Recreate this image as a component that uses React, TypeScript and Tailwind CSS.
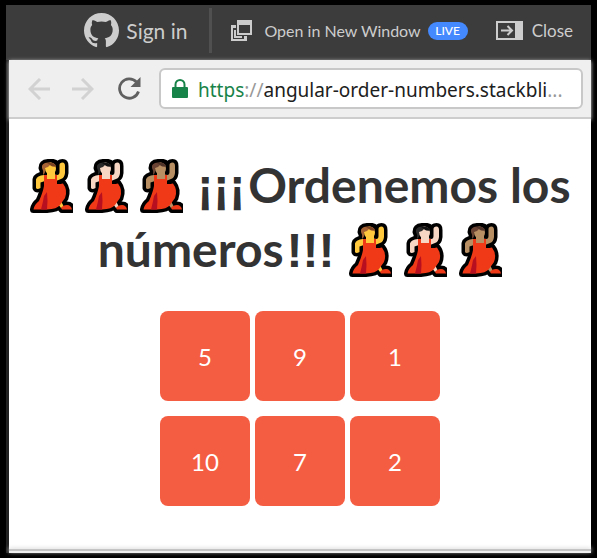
import React from "react";

type Tone = { skin: string; hair: string; shade: string };

const TONES: Tone[] = [
  { skin: "#ffc83d", hair: "#a56234", shade: "#7d4424" },
  { skin: "#f7d7c4", hair: "#2b2a2a", shade: "#111111" },
  { skin: "#b88f62", hair: "#6b4334", shade: "#50342a" },
];

const NUMBERS = [
  [5, 9, 1],
  [10, 7, 2],
];

function Dancer({ tone }: { tone: Tone }) {
  const hair = "M12 9Q12 4 18 3.5H23Q27 4 27 9L24 13Q17 17 13 16Q14 12 12 9Z";
  const raised = "M25 15.5Q29.5 17 29.5 13V6Q29.5 3.5 32.5 3.5Q35 3.5 35 7V14Q34.5 19 31 20L26 22Z";
  const lowered = "M14 16Q7 16.5 6 20.5V29Q7 31 10.5 29V23.5L15 22Z";
  const dress = "M14 16H17V20H25V16H27V25Q31 25 33 24.5Q38 31 35 39L30 46Q27 50 17 50.5H3.5Q4 46 9 42Q13 33 14 27Z";
  const leg = "M28 45L31 42L34 48L31 49Z";
  const shoe = "M31 49Q33 46 37 46Q41 46 42 50.5H32Z";
  return (
    <svg viewBox="0 0 43 54" className="inline-block h-[54px] w-[43px]" aria-hidden="true">
      <g fill="#000" stroke="#000" strokeWidth="7" strokeLinejoin="round">
        <path d={hair} />
        <path d={raised} />
        <path d={lowered} />
        <path d={dress} />
        <path d={leg} />
        <path d={shoe} />
      </g>
      <path d={raised + lowered + leg} fill={tone.skin} />
      <path d="M17 13H25V22H17Z" fill={tone.skin} />
      <ellipse cx="20.5" cy="9.5" rx="5.5" ry="6" fill={tone.skin} />
      <path d="M12 9Q11 4 18 3.5H21Q25 4 26 7.5Q22 8 20 6Q18 9 15 9Q16 14 13 16Q14 12 12 9Z" fill={tone.hair} />
      <path d="M17 4H21Q25 4 26 7.5Q22 8 20 6Z" fill={tone.shade} />
      <path d={dress} fill="#f03a17" />
      <path d="M17 33Q18 42 17 50.5H11Q13 43 14 37Z" fill="#b80f20" />
      <path d={shoe} fill="#f03a17" />
    </svg>
  );
}

function Dancers() {
  return (
    <span className="inline-flex gap-3 align-[-10px]">
      {TONES.map((tone) => (
        <Dancer key={tone.skin} tone={tone} />
      ))}
    </span>
  );
}

function Marks({ children }: { children: string }) {
  return <span className="mx-[3px] font-['Liberation_Sans',Arial,sans-serif] leading-none">{children}</span>;
}

function Toolbar() {
  return (
    <header className="flex h-[55px] items-center justify-end bg-[#3c3c3c] pr-[18px] pb-1 text-[17px] text-[#cdcdcd]">
      <button className="flex items-center gap-[7px] text-[21px]">
        <svg viewBox="0 0 16 16" className="size-[35px]" fill="currentColor" aria-hidden="true">
          <path d="M8 0C3.58 0 0 3.58 0 8c0 3.54 2.29 6.53 5.47 7.59.4.07.55-.17.55-.38 0-.19-.01-.82-.01-1.49-2.01.37-2.53-.49-2.69-.94-.09-.23-.48-.94-.82-1.13-.28-.15-.68-.52-.01-.53.63-.01 1.08.58 1.23.82.72 1.21 1.87.87 2.33.66.07-.52.28-.87.51-1.07-1.78-.2-3.64-.89-3.64-3.95 0-.87.31-1.59.82-2.15-.08-.2-.36-1.02.08-2.12 0 0 .67-.21 2.2.82.64-.18 1.32-.27 2-.27s1.36.09 2 .27c1.53-1.04 2.2-.82 2.2-.82.44 1.1.16 1.92.08 2.12.51.56.82 1.27.82 2.15 0 3.07-1.87 3.75-3.65 3.95.29.25.54.73.54 1.48 0 1.07-.01 1.93-.01 2.2 0 .21.15.46.55.38A8.01 8.01 0 0 0 16 8c0-4.42-3.58-8-8-8z" />
        </svg>
        Sign in
      </button>
      <span className="ml-[22px] h-[45px] w-[3px] bg-[#505050]" />
      <button className="ml-[19px] flex items-center">
        <svg viewBox="0 0 21 21" className="mr-3 size-[21px]" fill="currentColor" fillRule="evenodd" aria-hidden="true">
          <path d="M6 0H21V15H6ZM8 5V13H19V5Z" />
          <path d="M0 5H5V8H2V19H13V16H16V21H0Z" />
          <path d="M3 10H5V16H11V18H3Z" />
        </svg>
        <span className="text-base">Open in New Window</span>
        <span className="ml-[7px] flex h-[18px] w-10 items-center justify-center rounded-full bg-[#4489fe] text-xs font-medium text-white">
          LIVE
        </span>
      </button>
      <button className="ml-7 flex items-center gap-[9px]">
        <svg viewBox="0 0 27 19" className="h-[19px] w-[27px]" aria-hidden="true">
          <path d="M0 0H27V19H0ZM2 2V17H19V2Z" fill="currentColor" fillRule="evenodd" />
          <path d="M5 9.5H16M11.5 5L16 9.5L11.5 14" fill="none" stroke="currentColor" strokeWidth="2" />
        </svg>
        Close
      </button>
    </header>
  );
}

function AddressBar() {
  return (
    <nav className="ml-[3px] flex h-[59px] items-center border-b-2 border-[#cdcdcd] bg-[#efefef] pr-2 pl-[19px] shadow-[0_1px_4px_#dddddd]">
      <button aria-label="Back" disabled>
        <svg viewBox="0 0 22 22" className="size-[22px]" fill="none" stroke="#d2d2d2" strokeWidth="3" aria-hidden="true">
          <path d="M22 11H2M12 1L2 11L12 21" />
        </svg>
      </button>
      <button aria-label="Forward" className="ml-[22px]" disabled>
        <svg viewBox="0 0 22 22" className="size-[22px]" fill="none" stroke="#d2d2d2" strokeWidth="3" aria-hidden="true">
          <path d="M0 11H20M10 1L20 11L10 21" />
        </svg>
      </button>
      <button aria-label="Reload" className="ml-6">
        <svg viewBox="0 0 23 23" className="size-[23px]" aria-hidden="true">
          <path d="M18.5 5A9.7 9.7 0 1 0 20.5 14.5" fill="none" stroke="#606060" strokeWidth="2.8" />
          <path d="M22.5 0V10H12.5Z" fill="#606060" />
        </svg>
      </button>
      <div className="ml-[18px] flex h-[41px] min-w-0 flex-1 items-center rounded-md border-2 border-[#c8c8c8] bg-white pr-[2px] pl-[11px]">
        <svg viewBox="0 0 16 19" className="mr-[10px] h-[19px] w-4 shrink-0" aria-hidden="true">
          <path d="M3.5 9V5.5A4.5 4.5 0 0 1 12.5 5.5V9" fill="none" stroke="#188349" strokeWidth="2" />
          <rect y="8" width="16" height="11" rx="1" fill="#188349" />
        </svg>
        <a
          href="#"
          className="min-w-0 flex-1 truncate pt-[2px] font-['Noto_Sans',sans-serif] text-[19px] leading-8 text-[#999999]"
        >
          <span className="text-[#188349]">https</span>://
          <span className="text-[#202020]">angular-order-numbers.stackbli</span>...
        </a>
      </div>
    </nav>
  );
}

export default function App() {
  return (
    <div className="flex min-h-screen flex-col border-t-5 border-r-6 border-b-5 border-l-6 border-black bg-white font-[Lato,sans-serif]">
      <Toolbar />
      <div className="flex flex-1 flex-col bg-[#222222]">
        <AddressBar />
        <main className="ml-[3px] flex-1 bg-white px-2 pt-[34px] pb-10 text-center">
          <h1 className="text-5xl leading-16 font-bold text-[#333333]">
            <Dancers /> <Marks>¡¡¡</Marks>Ordenemos los números<Marks>!!!</Marks> <Dancers />
          </h1>
          <div className="mt-[30px] flex flex-col items-center gap-[15px]">
            {NUMBERS.map((row) => (
              <div key={row.join()} className="flex gap-[5px]">
                {row.map((n) => (
                  <button key={n} className="size-[90px] rounded-lg bg-[#f55d42] pt-[2px] text-2xl text-white">
                    {n}
                  </button>
                ))}
              </div>
            ))}
          </div>
        </main>
        <footer className="ml-[3px] h-1 border-t-2 border-[#c4c4c4] bg-[#f0f0f0] shadow-[0_-1px_4px_#dddddd]" />
      </div>
    </div>
  );
}
